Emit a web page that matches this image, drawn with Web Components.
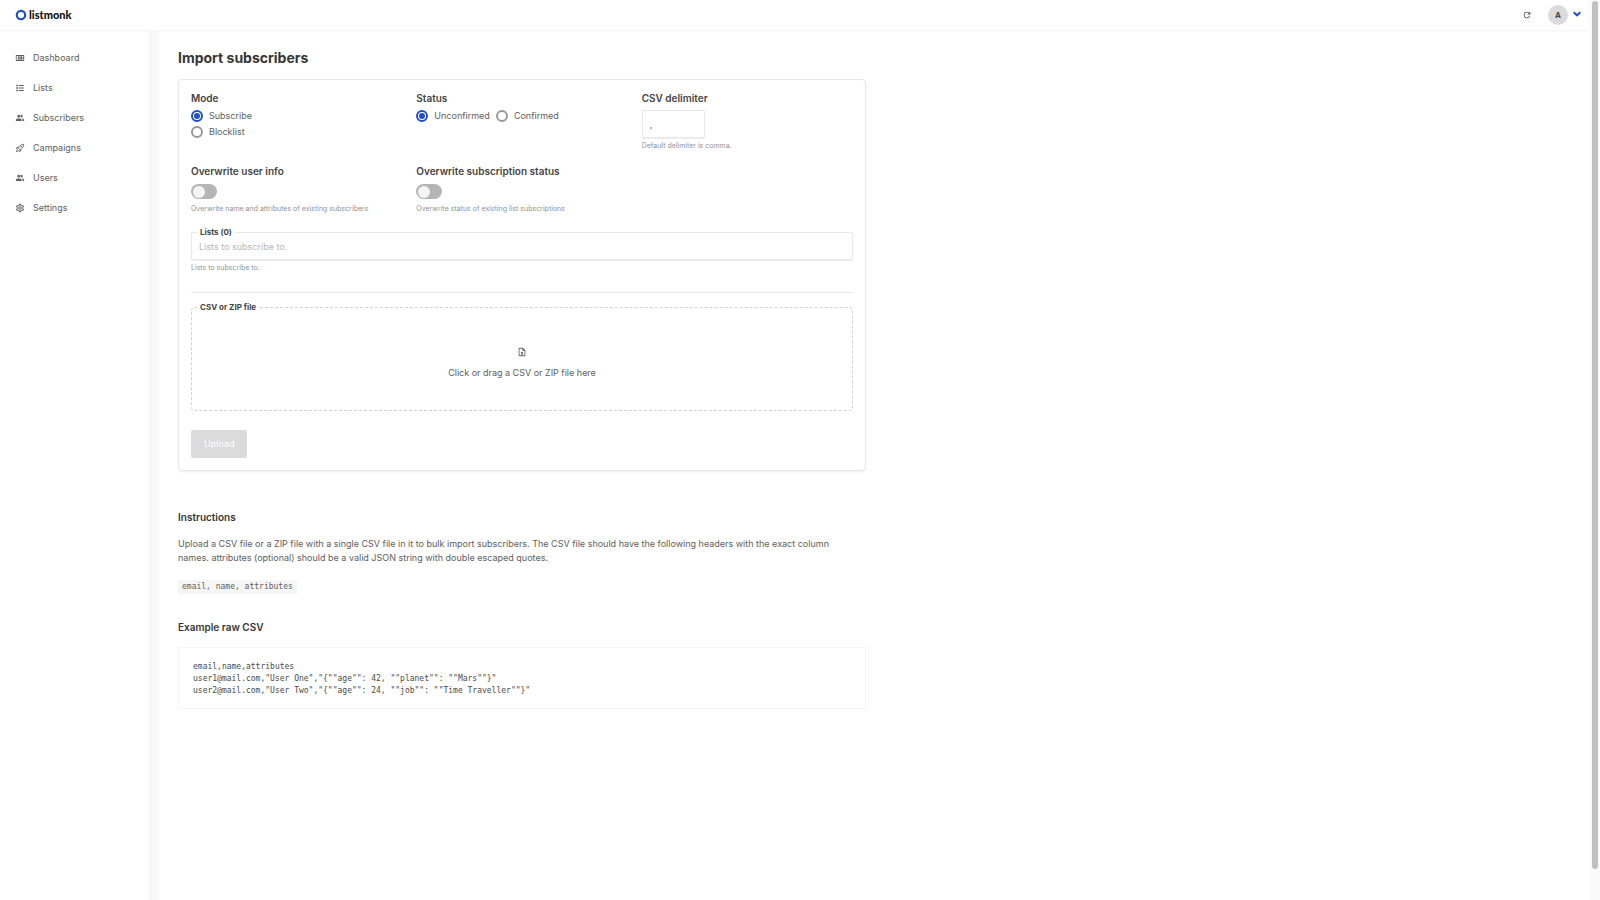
<!DOCTYPE html>
<html lang="en">
<head>
<meta charset="utf-8">
<title>Import subscribers / listmonk</title>
<style>
  :root {
    --primary: #2250c4;
    --text: #606060;
    --strong: #444;
    --muted: #929292;
    --line: #e8e8e8;
  }
  body {
    margin: 0;
    font: 9px/14px Inter, "Liberation Sans", sans-serif;
    color: var(--text);
    background: #fff;
  }
</style>
</head>
<body>
<app-shell>
  <top-bar slot="top"></top-bar>
  <side-nav slot="side">
    <nav-item icon="dashboard">Dashboard</nav-item>
    <nav-item icon="list">Lists</nav-item>
    <nav-item icon="people">Subscribers</nav-item>
    <nav-item icon="rocket">Campaigns</nav-item>
    <nav-item icon="people">Users</nav-item>
    <nav-item icon="cog">Settings</nav-item>
  </side-nav>
  <import-page></import-page>
</app-shell>

<script>
const ICONS = {
  dashboard: '<path d="M2 5V19H22V5H2M20 7V11H17V7H20M9 7H11V11H9V7M13 7H15V11H13V7M9 13H11V17H9V13M13 13H15V17H13V13M4 7H7V17H4V7M17 17V13H20V17H17Z"/>',
  list: '<path d="M3 4H7V8H3V4M9 5V7H21V5H9M3 10H7V14H3V10M9 11V13H21V11H9M3 16H7V20H3V16M9 17V19H21V17H9"/>',
  people: '<path d="M16 17V19H2V17S2 13 9 13 16 17 16 17M12.5 7.5A3.5 3.5 0 1 0 9 11A3.5 3.5 0 0 0 12.5 7.5M15.94 13A5.32 5.32 0 0 1 18 17V19H22V17S22 13.37 15.94 13M15 4A3.39 3.39 0 0 0 13.07 4.59A5 5 0 0 1 13.07 10.41A3.39 3.39 0 0 0 15 11A3.5 3.5 0 0 0 15 4Z"/>',
  rocket: '<path d="M8 13C10 7 14 3 21 3C21 10 17 14 11 16ZM9 10L5 10L3 14L7 14M14 15L14 19L10 21L10 17M6 16L3 21L8 18" fill="none" stroke="currentColor" stroke-width="2"/><circle cx="15" cy="9" r="2"/>',
  cog: '<path d="M12 8A4 4 0 0 1 16 12A4 4 0 0 1 12 16A4 4 0 0 1 8 12A4 4 0 0 1 12 8M12 10A2 2 0 0 0 10 12A2 2 0 0 0 12 14A2 2 0 0 0 14 12A2 2 0 0 0 12 10M10 22C9.75 22 9.54 21.82 9.5 21.58L9.13 18.93C8.5 18.68 7.96 18.34 7.44 17.94L4.95 18.95C4.73 19.03 4.46 18.95 4.34 18.73L2.34 15.27C2.21 15.05 2.27 14.78 2.46 14.63L4.57 12.97L4.5 12L4.57 11L2.46 9.37C2.27 9.22 2.21 8.95 2.34 8.73L4.34 5.27C4.46 5.05 4.73 4.96 4.95 5.05L7.44 6.05C7.96 5.66 8.5 5.32 9.13 5.07L9.5 2.42C9.54 2.18 9.75 2 10 2H14C14.25 2 14.46 2.18 14.5 2.42L14.87 5.07C15.5 5.32 16.04 5.66 16.56 6.05L19.05 5.05C19.27 4.96 19.54 5.05 19.66 5.27L21.66 8.73C21.79 8.95 21.73 9.22 21.54 9.37L19.43 11L19.5 12L19.43 13L21.54 14.63C21.73 14.78 21.79 15.05 21.66 15.27L19.66 18.73C19.54 18.95 19.27 19.04 19.05 18.95L16.56 17.95C16.04 18.34 15.5 18.68 14.87 18.93L14.5 21.58C14.46 21.82 14.25 22 14 22H10M11.25 4L10.88 6.61C9.68 6.86 8.62 7.5 7.85 8.39L5.44 7.35L4.69 8.65L6.8 10.2C6.4 11.37 6.4 12.64 6.8 13.8L4.68 15.36L5.43 16.66L7.86 15.62C8.63 16.5 9.68 17.14 10.87 17.38L11.24 20H12.76L13.13 17.39C14.32 17.14 15.37 16.5 16.14 15.62L18.57 16.66L19.32 15.36L17.2 13.81C17.6 12.64 17.6 11.37 17.2 10.2L19.31 8.65L18.56 7.35L16.15 8.39C15.38 7.5 14.32 6.86 13.12 6.62L12.75 4H11.25Z"/>',
  refresh: '<path d="M17.65 6.35C16.2 4.9 14.21 4 12 4A8 8 0 0 0 4 12A8 8 0 0 0 12 20C15.73 20 18.84 17.45 19.73 14H17.65C16.83 16.33 14.61 18 12 18A6 6 0 0 1 6 12A6 6 0 0 1 12 6C13.66 6 15.14 6.69 16.22 7.78L13 11H20V4L17.65 6.35Z"/>',
  chevron: '<path d="M2 4L12 13L22 4" fill="none" stroke="currentColor" stroke-width="6"/>',
  file: '<path d="M14 2H6A2 2 0 0 0 4 4V20A2 2 0 0 0 6 22H18A2 2 0 0 0 20 20V8L14 2M18 20H6V4H13V9H18V20M12 11L16 15H13.5V19H10.5V15H8L12 11Z"/>',
};

class SvgIcon extends HTMLElement {
  connectedCallback() {
    this.attachShadow({ mode: 'open' }).innerHTML = `
      <style>
        :host { display: block; width: 10px; height: 10px; flex: none; }
        :host([small]) { width: 8px; height: 8px; }
        svg { display: block; width: 100%; height: 100%; fill: currentColor; }
      </style>
      <svg viewBox="0 0 24 24" aria-hidden="true">${ICONS[this.getAttribute('name')]}</svg>`;
  }
}

class AppShell extends HTMLElement {
  connectedCallback() {
    this.attachShadow({ mode: 'open' }).innerHTML = `
      <style>
        :host { display: flex; min-height: 100vh; }
        .app { flex: 1; display: flex; flex-direction: column; min-width: 0; }
        .body { flex: 1; display: flex; }
        .gutter { width: 8px; background: #f9f9f9; }
        main { flex: 1; min-width: 0; padding: 17px 20px 16px 19px; }
        /* scroll track along the right edge of the window */
        .track { width: 6px; margin-left: 2px; padding: 1px 2px 31px 2px; background: #fafafa; display: flex; }
        .thumb { flex: 1; background: #c1c1c1; border-radius: 3px; }
      </style>
      <div class="app">
        <slot name="top"></slot>
        <div class="body">
          <slot name="side"></slot>
          <div class="gutter"></div>
          <main><slot></slot></main>
        </div>
      </div>
      <div class="track"><div class="thumb"></div></div>`;
  }
}

class TopBar extends HTMLElement {
  connectedCallback() {
    this.attachShadow({ mode: 'open' }).innerHTML = `
      <style>
        :host {
          display: flex; align-items: center; justify-content: space-between;
          height: 30px; padding: 0 7px 0 15px;
          border-bottom: 1px solid #f5f5f5;
          box-shadow: 0 0 2px #f3f3f3;
        }
        .logo {
          display: flex; align-items: center; gap: 2px;
          font: 900 11px/14px Lato, sans-serif; color: #111; text-decoration: none;
        }
        .logo svg { display: block; width: 12px; height: 12px; }
        .right { display: flex; align-items: center; }
        button {
          display: flex; align-items: center; padding: 0; border: 0;
          background: none; color: #4a4a4a; font: inherit;
        }
        .user { margin-left: 16px; gap: 5px; color: var(--primary); }
        .avatar {
          width: 20px; height: 20px; border-radius: 50%; background: #dbdbdb;
          color: var(--strong); font-size: 8px; font-weight: 700; line-height: 20px; text-align: center;
        }
      </style>
      <a class="logo" href="#">
        <svg viewBox="0 0 12 12" aria-hidden="true"><circle cx="6" cy="6" r="4.2" fill="none" stroke="#2250c4" stroke-width="2.2"/></svg>
        <span>listmonk</span>
      </a>
      <div class="right">
        <button aria-label="Refresh"><svg-icon name="refresh"></svg-icon></button>
        <button class="user" aria-label="Account">
          <span class="avatar">A</span><svg-icon name="chevron" small></svg-icon>
        </button>
      </div>`;
  }
}

class SideNav extends HTMLElement {
  connectedCallback() {
    this.attachShadow({ mode: 'open' }).innerHTML = `
      <style>
        :host { display: block; width: 151px; flex: none; border-right: 1px solid #eee; box-sizing: border-box; }
        nav { display: flex; flex-direction: column; padding: 12px 15px; }
      </style>
      <nav><slot></slot></nav>`;
  }
}

class NavItem extends HTMLElement {
  connectedCallback() {
    this.attachShadow({ mode: 'open' }).innerHTML = `
      <style>
        :host { display: block; }
        a {
          display: flex; align-items: center; gap: 8px; height: 30px;
          color: var(--text); text-decoration: none;
        }
      </style>
      <a href="#"><svg-icon name="${this.getAttribute('icon')}"></svg-icon><span><slot></slot></span></a>`;
  }
}

class RadioGroup extends HTMLElement {
  connectedCallback() {
    const name = this.getAttribute('name');
    const options = this.getAttribute('options').split(',');
    this.attachShadow({ mode: 'open' }).innerHTML = `
      <style>
        :host { display: block; }
        fieldset { border: 0; margin: 0; padding: 0; min-width: 0; }
        legend { padding: 0; margin-bottom: 3px; font-size: 10px; font-weight: 600; color: var(--strong); }
        .options { display: flex; flex-wrap: wrap; column-gap: 6px; }
        :host([stacked]) .options { flex-direction: column; }
        label { display: flex; align-items: center; gap: 6px; height: 16px; }
        input {
          appearance: none; box-sizing: border-box; width: 12px; height: 12px; margin: 0; padding: 1px;
          border: 2px solid #999; border-radius: 50%; background-clip: content-box;
        }
        input:checked { border-color: var(--primary); background-color: var(--primary); }
      </style>
      <fieldset>
        <legend>${name}</legend>
        <div class="options">
          ${options.map((o, i) => `<label><input type="radio" name="opt" ${i === 0 ? 'checked' : ''}>${o}</label>`).join('')}
        </div>
      </fieldset>`;
  }
}

class ToggleField extends HTMLElement {
  connectedCallback() {
    this.attachShadow({ mode: 'open' }).innerHTML = `
      <style>
        :host { display: block; }
        label { display: block; font-size: 10px; font-weight: 600; color: var(--strong); }
        input {
          appearance: none; display: flex; align-items: center; box-sizing: border-box;
          width: 26px; height: 15px; margin: 6px 0 3px; padding: 0 2px;
          border-radius: 8px; background: #b5b5b5;
        }
        input::before { content: ''; width: 12px; height: 12px; border-radius: 50%; background: #f5f5f5; }
        p { margin: 0; font-size: 7px; color: var(--muted); white-space: nowrap; }
      </style>
      <label for="toggle">${this.getAttribute('label')}</label>
      <input id="toggle" type="checkbox" role="switch">
      <p>${this.getAttribute('help')}</p>`;
  }
}

class TextField extends HTMLElement {
  connectedCallback() {
    this.attachShadow({ mode: 'open' }).innerHTML = `
      <style>
        :host { display: block; position: relative; }
        label { display: block; margin-bottom: 5px; font-size: 10px; font-weight: 600; color: var(--strong); }
        input {
          display: block; box-sizing: border-box; width: 63px; height: 28px; padding: 0 7px;
          border: 1px solid var(--line); border-radius: 2px; background: #fff;
          box-shadow: 0 1px 1px #eee; font: inherit; color: var(--text);
        }
        input::placeholder { color: #b8b8b8; opacity: 1; }
        p { margin: 1px 0 0; font-size: 7px; color: var(--muted); }
        /* the label sits on the top border */
        :host([floating]) label {
          position: absolute; top: -7px; left: 6px; padding: 0 3px; background: #fff;
          font-size: 8px; font-weight: 700;
        }
        :host([floating]) input { width: 100%; }
      </style>
      <label for="field">${this.getAttribute('label')}</label>
      <input id="field" type="text" value="${this.getAttribute('value') || ''}" placeholder="${this.getAttribute('placeholder') || ''}">
      <p>${this.getAttribute('help')}</p>`;
  }
}

class FileDrop extends HTMLElement {
  connectedCallback() {
    this.attachShadow({ mode: 'open' }).innerHTML = `
      <style>
        :host { display: block; position: relative; }
        .title {
          position: absolute; top: -7px; left: 6px; padding: 0 3px; background: #fff;
          font-size: 8px; font-weight: 700; color: var(--strong);
        }
        .drop {
          display: flex; flex-direction: column; align-items: center; gap: 9px;
          padding: 39px 16px 30px; border: 1px dashed #d2d2d2; border-radius: 4px;
        }
        input { position: absolute; width: 1px; height: 1px; opacity: 0; }
      </style>
      <label class="title" for="file">CSV or ZIP file</label>
      <label class="drop" for="file">
        <svg-icon name="file"></svg-icon>
        <span>Click or drag a CSV or ZIP file here</span>
      </label>
      <input id="file" type="file" accept=".csv,.zip">`;
  }
}

class ImportForm extends HTMLElement {
  connectedCallback() {
    this.attachShadow({ mode: 'open' }).innerHTML = `
      <style>
        :host { display: block; }
        form {
          padding: 11px 12px 12px; border: 1px solid var(--line); border-radius: 4px;
          box-shadow: 0 1px 2px #eee;
        }
        .row { display: grid; grid-template-columns: repeat(3, 1fr); column-gap: 14px; margin-bottom: 11px; }
        .row + .row { margin-bottom: 16px; }
        hr { height: 1px; margin: 17px 0 14px; border: 0; background: var(--line); }
        button {
          height: 28px; margin-top: 19px; padding: 0 13px; border: 0; border-radius: 2px;
          background: #dbdbdb; color: #fff; font: inherit;
        }
      </style>
      <form>
        <div class="row">
          <radio-group name="Mode" options="Subscribe,Blocklist" stacked></radio-group>
          <radio-group name="Status" options="Unconfirmed,Confirmed"></radio-group>
          <text-field label="CSV delimiter" value="," help="Default delimiter is comma."></text-field>
        </div>
        <div class="row">
          <toggle-field label="Overwrite user info" help="Overwrite name and attributes of existing subscribers"></toggle-field>
          <toggle-field label="Overwrite subscription status" help="Overwrite status of existing list subscriptions"></toggle-field>
        </div>
        <text-field floating label="Lists (0)" placeholder="Lists to subscribe to." help="Lists to subscribe to."></text-field>
        <hr>
        <file-drop></file-drop>
        <button type="submit" disabled>Upload</button>
      </form>`;
  }
}

class ImportPage extends HTMLElement {
  connectedCallback() {
    this.attachShadow({ mode: 'open' }).innerHTML = `
      <style>
        :host { display: block; max-width: 688px; }
        h1 { margin: 0 0 11px; font-size: 14px; line-height: 20px; font-weight: 700; color: #363636; }
        h2 { margin: 0; font-size: 10px; line-height: 14px; font-weight: 600; color: #363636; }
        .help { margin: 39px 0 26px; }
        p { margin: 13px 0 14px; padding-right: 16px; }
        code {
          display: inline-block; padding: 0 4px; background: #f6f6f6;
          font: 8px/14px "DejaVu Sans Mono", monospace;
        }
        pre {
          margin: 13px 0 0; padding: 13px 14px 11px; border: 1px solid #f5f5f5;
          font: 8px/12px "DejaVu Sans Mono", monospace; color: #4a4a4a;
        }
      </style>
      <h1>Import subscribers</h1>
      <import-form></import-form>
      <section class="help">
        <h2>Instructions</h2>
        <p>Upload a CSV file or a ZIP file with a single CSV file in it to bulk import subscribers. The CSV file should have the following headers with the exact column names. attributes (optional) should be a valid JSON string with double escaped quotes.</p>
        <code>email, name, attributes</code>
      </section>
      <section>
        <h2>Example raw CSV</h2>
        <pre>email,name,attributes
user1@mail.com,"User One","{""age"": 42, ""planet"": ""Mars""}"
user2@mail.com,"User Two","{""age"": 24, ""job"": ""Time Traveller""}"</pre>
      </section>`;
  }
}

customElements.define('svg-icon', SvgIcon);
customElements.define('radio-group', RadioGroup);
customElements.define('toggle-field', ToggleField);
customElements.define('text-field', TextField);
customElements.define('file-drop', FileDrop);
customElements.define('import-form', ImportForm);
customElements.define('import-page', ImportPage);
customElements.define('nav-item', NavItem);
customElements.define('side-nav', SideNav);
customElements.define('top-bar', TopBar);
customElements.define('app-shell', AppShell);
</script>
</body>
</html>
